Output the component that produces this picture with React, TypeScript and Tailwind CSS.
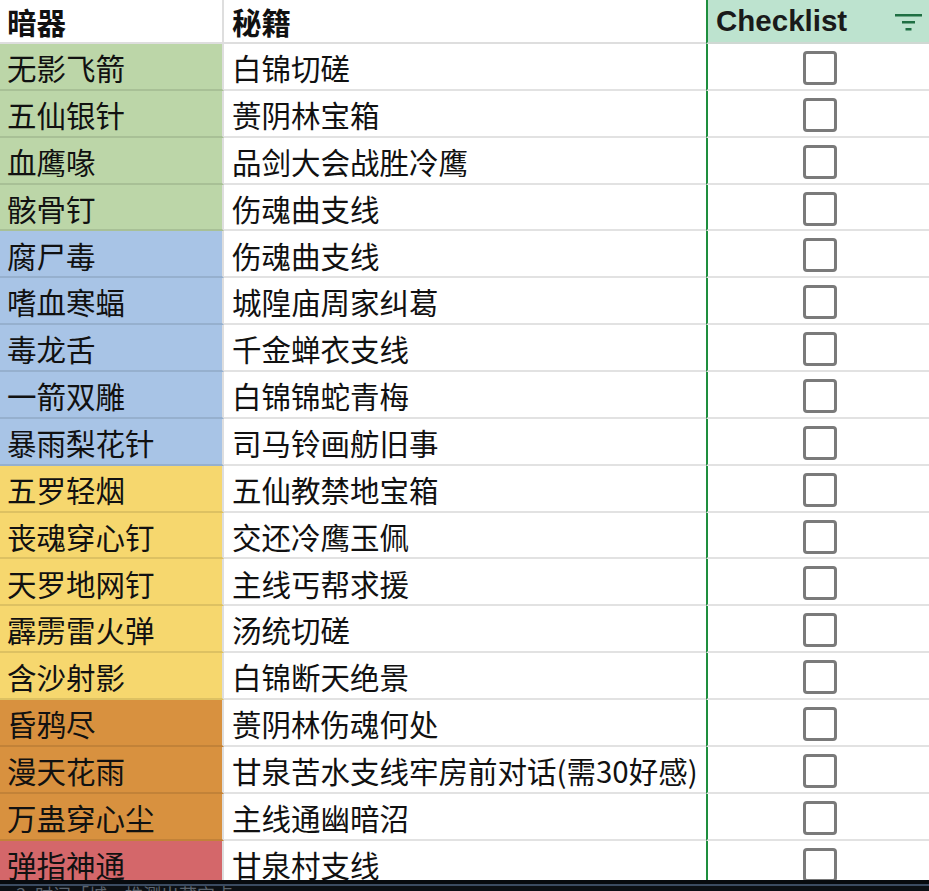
import React from "react";

type Row = { a: string; b: string; c: string };

const G = "bg-[#bcd6a8]";
const B = "bg-[#a8c4e6]";
const Y = "bg-[#f6d76e]";
const O = "bg-[#d8913f]";
const R = "bg-[#d4676a]";

const rows: Row[] = [
  { a: "无影飞箭", b: "白锦切磋", c: G },
  { a: "五仙银针", b: "蒉阴林宝箱", c: G },
  { a: "血鹰喙", b: "品剑大会战胜冷鹰", c: G },
  { a: "骸骨钉", b: "伤魂曲支线", c: G },
  { a: "腐尸毒", b: "伤魂曲支线", c: B },
  { a: "嗜血寒蝠", b: "城隍庙周家纠葛", c: B },
  { a: "毒龙舌", b: "千金蝉衣支线", c: B },
  { a: "一箭双雕", b: "白锦锦蛇青梅", c: B },
  { a: "暴雨梨花针", b: "司马铃画舫旧事", c: B },
  { a: "五罗轻烟", b: "五仙教禁地宝箱", c: Y },
  { a: "丧魂穿心钉", b: "交还冷鹰玉佩", c: Y },
  { a: "天罗地网钉", b: "主线丐帮求援", c: Y },
  { a: "霹雳雷火弹", b: "汤统切磋", c: Y },
  { a: "含沙射影", b: "白锦断天绝景", c: Y },
  { a: "昏鸦尽", b: "蒉阴林伤魂何处", c: O },
  { a: "漫天花雨", b: "甘泉苦水支线牢房前对话(需30好感)", c: O },
  { a: "万蛊穿心尘", b: "主线通幽暗沼", c: O },
  { a: "弹指神通", b: "甘泉村支线", c: R },
];

const font = { fontFamily: '"Noto Sans CJK SC", "Noto Sans", sans-serif' };

function FilterIcon() {
  return (
    <svg width="30" height="20" viewBox="0 0 30 20" className="block">
      <rect x="1" y="1" width="27" height="2.5" fill="#1f6f43" />
      <rect x="8" y="8" width="13" height="2.5" fill="#1f6f43" />
      <rect x="11.5" y="15" width="6" height="2.5" fill="#1f6f43" />
    </svg>
  );
}

export default function App() {
  return (
    <div className="w-[929px] h-[891px] overflow-hidden bg-white flex flex-col" style={font}>
      <div className="h-[880px] overflow-hidden flex flex-col text-[29.5px] text-[#111]">
        {/* Header */}
        <div className="flex h-[44px] shrink-0">
          <div className="w-[224px] shrink-0 border-r-2 border-b-2 border-[#dedede] flex items-center pl-[7px] font-bold leading-none pt-[1px]">
            暗器
          </div>
          <div className="w-[482px] shrink-0 border-b-2 border-[#dedede] flex items-center pl-[8px] font-bold leading-none pt-[1px]">
            秘籍
          </div>
          <div className="w-[226px] shrink-0 border-l-2 border-[#1e8e3e] bg-[#bde3cf] border-b-2 border-b-[#cfd8d3] flex items-center pl-[8px] pr-[5px] justify-between">
            <span
              className="font-bold leading-none text-[29.5px] text-[#1a1a1a]"
              style={{ fontFamily: '"Liberation Sans", Arial, sans-serif' }}
            >
              Checklist
            </span>
            <span className="mr-[3px] mt-[4px]">
              <FilterIcon />
            </span>
          </div>
        </div>
        {rows.map((r, i) => (
          <div key={i} className="flex h-[46.87px] shrink-0">
            <div
              className={`${r.c} w-[224px] shrink-0 border-r-2 border-r-[#dedede] border-b-2 border-b-black/10 flex items-center pl-[7px] leading-none pt-[3px] whitespace-nowrap`}
            >
              {r.a}
            </div>
            <div className="w-[482px] shrink-0 border-b-2 border-[#e2e2e2] flex items-center pl-[8px] leading-none pt-[3px] whitespace-nowrap overflow-hidden">
              {r.b}
            </div>
            <div className="w-[226px] shrink-0 border-l-2 border-l-[#1e8e3e] border-b-2 border-b-[#e2e2e2] flex items-center justify-center pt-[3px]">
              <div className="w-[34px] h-[34px] border-[3px] border-[#7a7a7a] rounded-[4px] bg-white" />
            </div>
          </div>
        ))}
      </div>
      <div className="h-[11px] shrink-0 bg-[#070a0e] flex flex-col overflow-hidden">
        <div className="h-[4px] shrink-0" />
        <div className="h-[2px] shrink-0 bg-[#3b4b61]" />
        <div className="flex-1 bg-[#0c1015] overflow-hidden">
          <div className="pl-[16px] text-[18px] leading-[20px] text-[#5b636d] whitespace-nowrap -mt-[2px]">
            3. 时间「城」推测出藏宝点
          </div>
        </div>
      </div>
    </div>
  );
}
